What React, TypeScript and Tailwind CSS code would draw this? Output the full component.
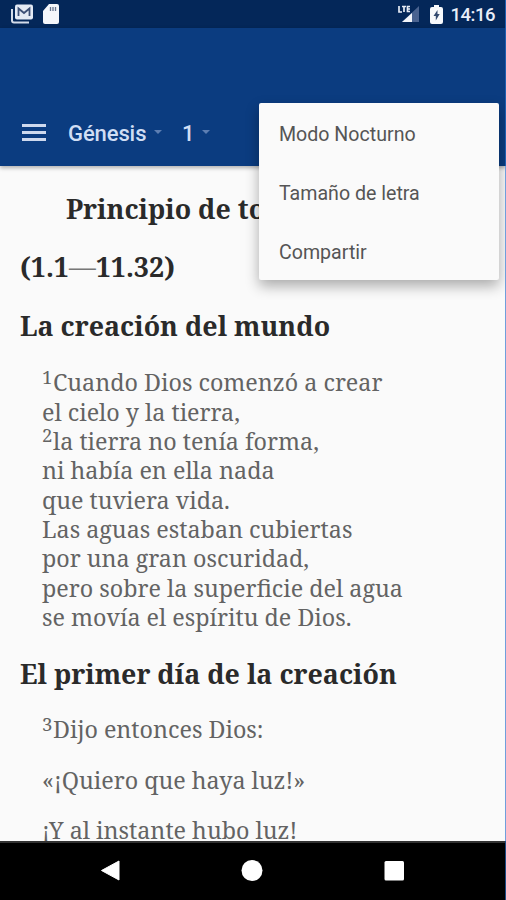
import type { ReactNode } from "react";

function StatusBar() {
  return (
    <div className="flex h-[28px] shrink-0 items-center bg-[#042759] pl-[10px] pr-[11px] font-['Roboto',sans-serif]">
      <svg width="24" height="20" viewBox="0 0 24 20">
        <path d="M2 5v11.500q0 2 2 2h15" fill="none" stroke="#d3dbe9" strokeWidth="2" />
        <rect x="5" y="0.500" width="18" height="15" rx="2" fill="#e4eaf5" />
        <path d="M8.500 12V4.500L14 9l5.500-4.500V12" fill="none" stroke="#3d5077" strokeWidth="1.800" />
      </svg>
      <svg className="ml-[9px]" width="17" height="20" viewBox="0 0 17 20">
        <path d="M6 0h8q2 0 2 2v16q0 2-2 2H2q-2 0-2-2V7z" fill="#f4f6fb" />
        <path d="M7.500 3v4M10 3v4M12.500 3v4" stroke="#67758f" strokeWidth="1.300" />
      </svg>
      <div className="flex-1" />
      <svg width="23" height="18" viewBox="0 0 23 18">
        <path d="M22 1v16H5z" fill="#4a6390" />
        <path d="M15 8v9H5z" fill="#f2f5fa" />
        <path d="M2 1v6h3M5 1.500h4M7 1.500V7M13 1.500h-2.500v5H13M10.500 4H13" fill="none" stroke="#e6ebf5" strokeWidth="1.700" />
      </svg>
      <svg className="ml-[10px]" width="13" height="19" viewBox="0 0 13 19">
        <path d="M4 0h5v2h2q2 0 2 2v13q0 2-2 2H2q-2 0-2-2V4q0-2 2-2h2z" fill="#f7f9fc" />
        <path d="M7.500 5L3.500 11h2.300v4.500L9.700 9H7.500z" fill="#32496f" />
      </svg>
      <span className="ml-[8px] pt-[2px] text-[18.500px] font-medium leading-[28px] tracking-[-0.5px] text-[#e9eef8]">14:16</span>
    </div>
  );
}

function Caret() {
  return <span className="mb-[2px] border-x-[4.500px] border-t-[4.500px] border-x-transparent border-t-[#5d7eb2]" />;
}

function Toolbar() {
  return (
    <div className="z-10 flex h-[138px] shrink-0 items-end bg-[#0b3c80] pb-[13px] pl-[22px] font-['Roboto',sans-serif] shadow-[0_2px_4px_rgba(0,0,0,0.3)]">
      <div className="flex h-[40px] items-center">
        <div className="mb-px flex w-[24px] flex-col gap-[4px]">
          <span className="h-[3px] bg-[#ced9ee]" />
          <span className="h-[3px] bg-[#ced9ee]" />
          <span className="h-[3px] bg-[#ced9ee]" />
        </div>
        <span className="ml-[22px] w-[86px] text-[22px] font-medium tracking-[-0.1px] text-[#d0def4]">Génesis</span>
        <Caret />
        <span className="ml-[20px] w-[20px] text-[22px] font-medium text-[#d0def4]">1</span>
        <Caret />
      </div>
    </div>
  );
}

function OverflowMenu() {
  return (
    <div className="absolute left-[259px] top-[103px] z-20 flex h-[177px] w-[240px] flex-col rounded-[2px] bg-[#fafafa] pl-[20px] font-['Roboto',sans-serif] text-[19.600px] text-[#555] shadow-[0_6px_14px_rgba(0,0,0,0.32)]">
      <span className="flex h-[59px] items-center pt-[4px]">Modo Nocturno</span>
      <span className="flex h-[59px] items-center pt-[4px]">Tamaño de letra</span>
      <span className="flex h-[59px] items-center pt-[4px]">Compartir</span>
    </div>
  );
}

function Heading({ children, className = "" }: { children: ReactNode; className?: string }) {
  return (
    <h2 className={`whitespace-nowrap text-[26.800px] font-bold leading-[30px] text-[#2a2a2a] ${className}`}>{children}</h2>
  );
}

function Line({ verse, children, className = "" }: { verse?: string; children: ReactNode; className?: string }) {
  return (
    <p className={`flex h-[29.350px] items-center whitespace-nowrap text-[23.300px] leading-[29.350px] text-[#636363] ${className}`}>
      {verse && <sup className="top-0 mb-[13px] w-[11px] text-[18.500px] leading-[16px]">{verse}</sup>}
      <span>{children}</span>
    </p>
  );
}

export default function App() {
  return (
    <div className="relative flex h-[900px] w-[506px] flex-col overflow-hidden bg-[#fafafa]">
      <StatusBar />
      <Toolbar />
      <OverflowMenu />
      <main className="h-[675px] shrink-0 overflow-hidden pl-[20px] pt-[28px] font-['Noto_Serif','DejaVu_Serif',serif]">
        <Heading className="pl-[46px]">Principio de todo</Heading>
        <Heading className="mt-[28px]">(1.1<span className="font-normal text-[#777]">—</span>11.32)</Heading>
        <Heading className="mt-[29px]">La creación del mundo</Heading>
        <div className="mt-[27.400px] pl-[22px]">
          <Line verse="1">Cuando Dios comenzó a crear</Line>
          <Line>el cielo y la tierra,</Line>
          <Line verse="2">la tierra no tenía forma,</Line>
          <Line>ni había en ella nada</Line>
          <Line>que tuviera vida.</Line>
          <Line>Las aguas estaban cubiertas</Line>
          <Line>por una gran oscuridad,</Line>
          <Line>pero sobre la superficie del agua</Line>
          <Line>se movía el espíritu de Dios.</Line>
        </div>
        <Heading className="mt-[27px]">El primer día de la creación</Heading>
        <div className="mt-[26px] flex flex-col gap-[21px] pl-[22px]">
          <Line verse="3">Dijo entonces Dios:</Line>
          <Line>«¡Quiero que haya luz!»</Line>
          <Line>¡Y al instante hubo luz!</Line>
        </div>
      </main>
      <nav className="h-[59px] shrink-0 border-t-2 border-[#333] bg-black">
        <svg width="506" height="57" viewBox="0 0 506 57">
          <path d="M101.500 27.500L119 18v19z" fill="#fff" stroke="#fff" strokeLinejoin="round" />
          <circle cx="252" cy="27.500" r="10.500" fill="#fff" />
          <rect x="384.500" y="18" width="19.500" height="19.500" rx="1.500" fill="#fff" />
        </svg>
      </nav>
      <div className="absolute inset-y-0 right-0 z-30 flex w-px flex-col">
        <span className="h-[166px] bg-[#1f5fb0]" />
        <span className="h-[675px] bg-[#6f9fdc]" />
        <span className="flex-1 bg-[#1d4b85]" />
      </div>
    </div>
  );
}
